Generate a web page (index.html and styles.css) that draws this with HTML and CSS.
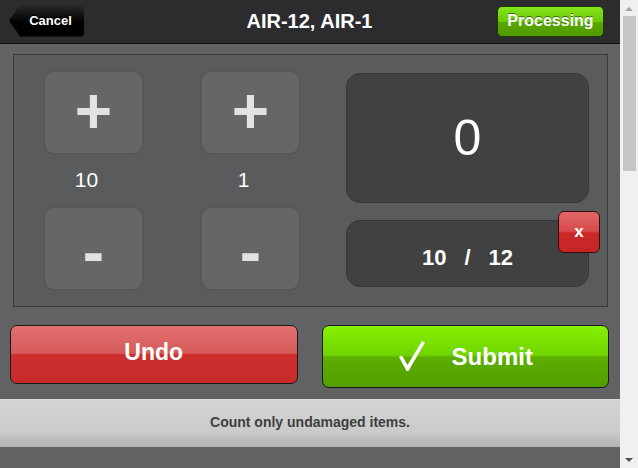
FILE: index.html
```html
<!DOCTYPE html>
<html lang="en">
<head>
  <meta charset="UTF-8">
  <title>Count</title>
  <link rel="stylesheet" href="styles.css">
</head>
<body>

<div class="viewport">
  <div class="page">
    <div class="header">
      <div class="header-left">
        <button class="back-btn">Cancel</button>
      </div>
      <h1 class="title">AIR-12, AIR-1</h1>
      <div class="header-right">
        <button class="status-btn">Processing</button>
      </div>
    </div>

    <div class="panel">
      <div class="steppers">
        <div class="step-btn">+</div>
        <div class="step-btn">+</div>
        <div class="step-label">10</div>
        <div class="step-label">1</div>
        <div class="step-btn minus">-</div>
        <div class="step-btn minus">-</div>
      </div>
      <div class="readout">
        <div class="count-box">0</div>
        <div class="total-box">
          <span>10</span><span>/</span><span>12</span>
          <button class="clear-btn">x</button>
        </div>
      </div>
    </div>

    <div class="actions">
      <button class="action undo">Undo</button>
      <button class="action submit">
        <svg class="check" width="28" height="32" viewBox="0 0 28 32">
          <path d="M1 17 L4 15.5 L9.5 25 L24 1 L27 2.5 L10.5 31 L8.5 31 Z" fill="#fff"/>
        </svg>
        <span>Submit</span>
      </button>
    </div>

    <div class="footer">Count only undamaged items.</div>
  </div>

  <div class="scrollbar">
    <div class="arrow up"></div>
    <div class="thumb"></div>
    <div class="arrow down"></div>
  </div>
</div>

</body>
</html>
```

FILE: styles.css
```css
* {
  box-sizing: border-box;
}

body {
  margin: 0;
  font-family: "Liberation Sans", Arial, sans-serif;
  background: #616264;
  height: 468px;
  overflow: hidden;
}

.viewport {
  display: flex;
  height: 468px;
}

.page {
  flex: 1;
  display: flex;
  flex-direction: column;
}

/* Header */
.header {
  height: 44px;
  background: #2c2c2e;
  border-bottom: 1px solid #0e0e0e;
  display: grid;
  grid-template-columns: 1fr auto 1fr;
  align-items: center;
  padding: 0 16px 0 9px;
}

.title {
  margin: 0 0 0 6px;
  color: #fff;
  font-size: 20px;
  font-weight: bold;
}

.header-right {
  display: flex;
  justify-content: flex-end;
}

button {
  font-family: inherit;
  cursor: pointer;
}

.back-btn {
  height: 32px;
  width: 75px;
  margin-top: -2px;
  padding: 0 0 0 8px;
  border: none;
  color: #fff;
  font-size: 13px;
  font-weight: bold;
  background: linear-gradient(#2a2a2a, #000 55%, #000);
  clip-path: polygon(11px 0, 100% 0, 100% 100%, 11px 100%, 0 50%);
  border-radius: 4px;
  text-shadow: 0 -1px 0 #000;
}

.status-btn {
  height: 31px;
  width: 107px;
  margin-top: -1px;
  border: 1px solid #1d3a00;
  border-radius: 5px;
  color: #fff;
  font-size: 16px;
  font-weight: bold;
  background: linear-gradient(#86e51a, #6bc80a 50%, #58a800 52%, #4f9a00);
  text-shadow: 0 -1px 0 #3a6a00;
}

/* Counter panel */
.panel {
  height: 253px;
  margin: 10px 12px 0 13px;
  background: #5a5b5d;
  border: 1px solid #38393b;
  display: flex;
  padding: 17px 18px 16px 31px;
  gap: 47px;
}

.steppers {
  display: grid;
  grid-template-columns: 97px 97px;
  grid-template-rows: 81px 55px 81px;
  column-gap: 60px;
}

.step-btn {
  background: #666667;
  border-radius: 9px;
  box-shadow: 0 0 3px rgba(0, 0, 0, 0.15);
  color: #e2e2e2;
  font-size: 64px;
  font-weight: bold;
  line-height: 78px;
  text-align: center;
}

.step-btn.minus {
  line-height: 88px;
}

.step-label {
  color: #fff;
  font-size: 21px;
  text-align: center;
  line-height: 53px;
  padding-right: 14px;
}

.readout {
  flex: 1;
  display: flex;
  flex-direction: column;
  gap: 17px;
  padding-top: 1px;
}

.count-box {
  height: 130px;
  background: #414142;
  border: 1px solid #363637;
  border-radius: 14px;
  color: #fff;
  font-size: 50px;
  display: flex;
  align-items: center;
  justify-content: center;
}

.total-box {
  position: relative;
  height: 67px;
  background: #414142;
  border: 1px solid #363637;
  border-radius: 14px;
  color: #fff;
  font-size: 22px;
  font-weight: bold;
  display: flex;
  align-items: center;
  justify-content: center;
  gap: 18px;
  padding-top: 8px;
}

.clear-btn {
  position: absolute;
  left: 211px;
  top: -10px;
  width: 42px;
  height: 42px;
  border: 1px solid #3a0a0a;
  border-radius: 6px;
  color: #fff;
  font-size: 17px;
  font-weight: bold;
  padding: 0;
  background: linear-gradient(#e06666, #d94a4a 48%, #cc2a2a 52%, #c42424);
}

/* Action buttons */
.actions {
  display: flex;
  gap: 24px;
  margin: 18px 11px 0 10px;
  align-items: flex-start;
}

.action {
  flex: 1;
  border: 1px solid #1a1a1a;
  border-radius: 7px;
  color: #fff;
  font-weight: bold;
}

.undo {
  height: 59px;
  font-size: 23px;
  padding-bottom: 6px;
  background: linear-gradient(#e27070, #d65a5a 48%, #cc2f2c 50%, #c72a28);
}

.submit {
  height: 63px;
  font-size: 24px;
  display: flex;
  align-items: center;
  justify-content: center;
  padding-right: 6px;
  background: linear-gradient(#86f000, #70d400 48%, #5cae00 51%, #529e00);
}

.check {
  margin-right: 26px;
  margin-top: -2px;
}

/* Footer hint */
.footer {
  margin-top: 11px;
  height: 48px;
  background: linear-gradient(#d3d4d4, #c9caca 70%, #bbbcbc 85%, #b1b2b2);
  border-top: 1px solid #dcdcdc;
  color: #3e3e3e;
  font-size: 14px;
  font-weight: bold;
  display: flex;
  align-items: center;
  justify-content: center;
  padding-bottom: 3px;
}

/* Scrollbar */
.scrollbar {
  width: 18px;
  background: #f0f0f0;
  display: flex;
  flex-direction: column;
  align-items: center;
}

.thumb {
  width: 13px;
  height: 155px;
  background: #c6c6c6;
  margin-top: 5px;
}

.arrow {
  width: 0;
  height: 0;
  border-left: 4px solid transparent;
  border-right: 4px solid transparent;
}

.arrow.up {
  margin-top: 7px;
  border-bottom: 4px solid #a3a3a3;
}

.arrow.down {
  margin-top: auto;
  margin-bottom: 6px;
  border-top: 4px solid #505050;
}
```
